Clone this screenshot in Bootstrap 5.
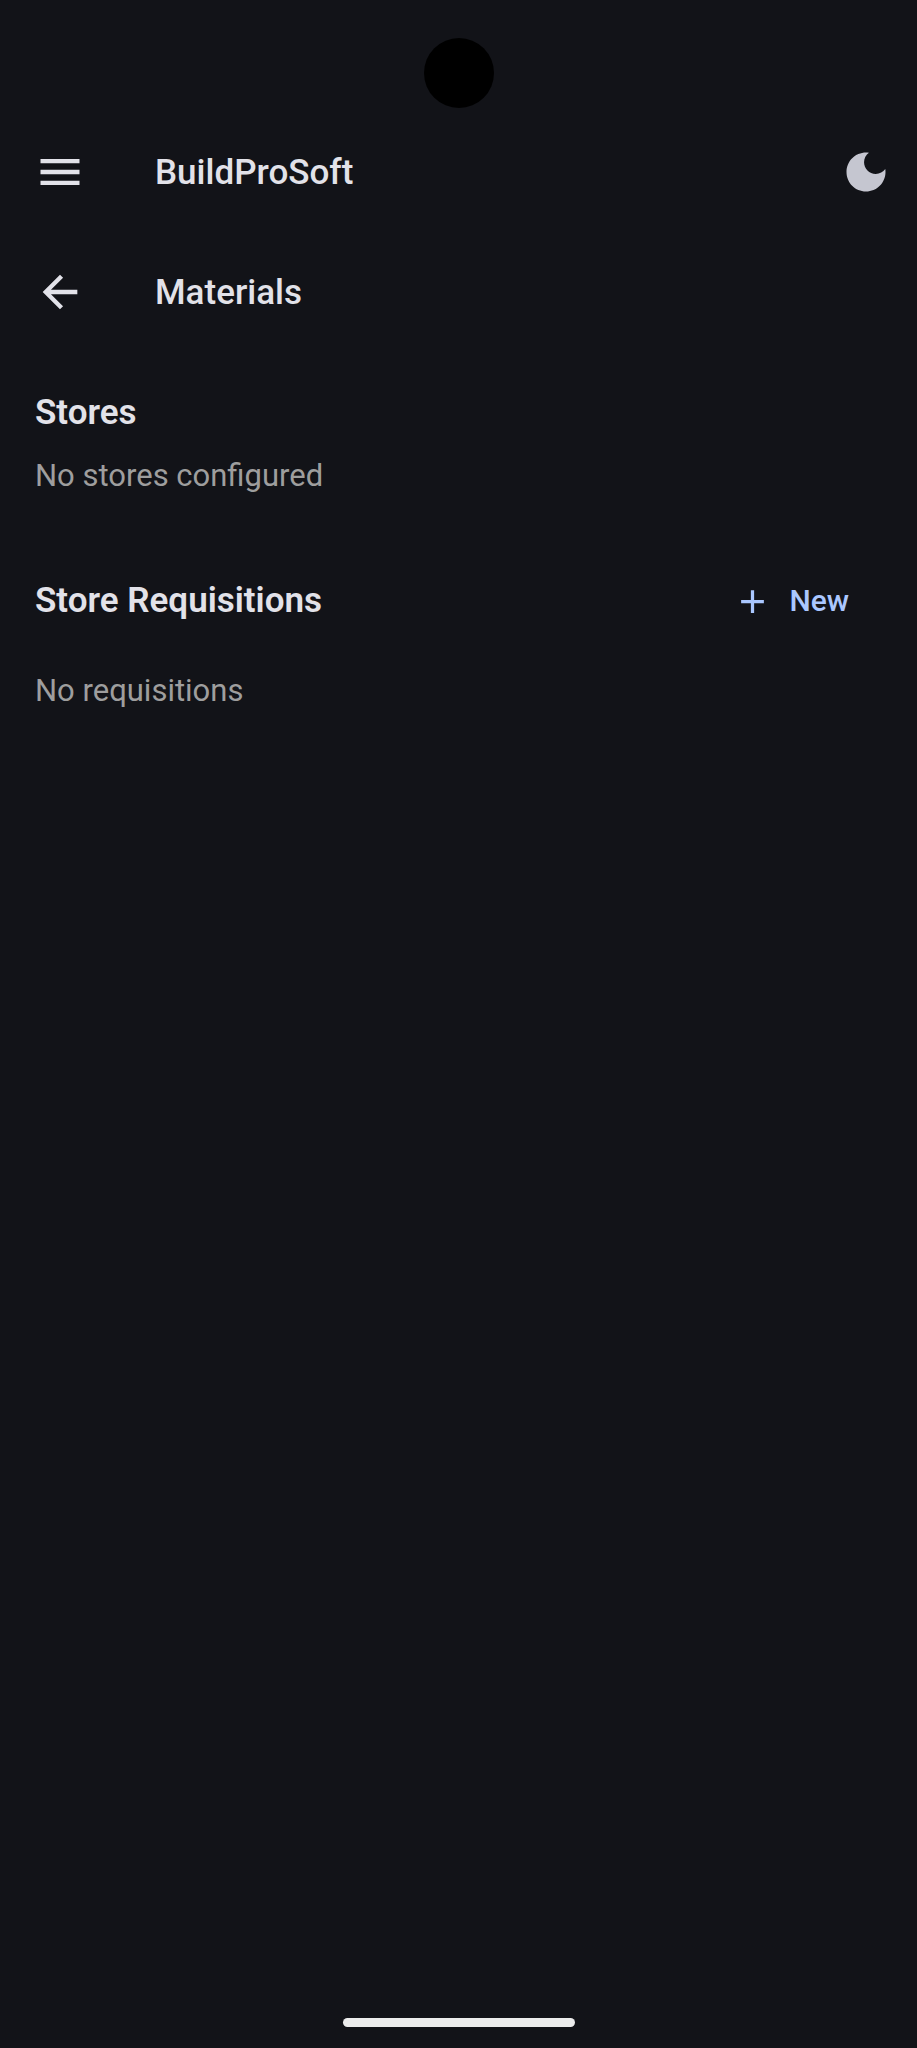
<!DOCTYPE html>
<html lang="en" data-bs-theme="dark">
<head>
<meta charset="utf-8">
<meta name="viewport" content="width=device-width, initial-scale=1">
<title>BuildProSoft – Materials</title>
<link href="https://cdn.jsdelivr.net/npm/bootstrap@5.3.0/dist/css/bootstrap.min.css" rel="stylesheet">
<style>
  body { background: #121318; color: #e2e2e9; font-family: Roboto, "Liberation Sans", sans-serif; }
  .status-area { height: 112px; padding-top: 38px; }
  .camera { width: 70px; height: 70px; background: #000; }
  .app-bar { height: 120px; padding: 0 25px 0 34px; }
  .icon-btn { width: 52px; height: 52px; color: inherit; }
  .icon-btn svg { width: 52px; height: 52px; }
  .theme-btn { color: #c5c6d0; }
  .bar-title, .section-title { color: #e2e2e9; font-size: 35px; line-height: 52px; font-weight: 500; }
  .bar-title { margin-left: 69px; padding-top: 2px; }
  .content { padding: 35px; }
  .section-title { font-weight: 600; }
  .empty-note { font-size: 31px; line-height: 42px; color: #9e9e9e; }
  .section-head { margin-top: 61px; height: 86px; margin-bottom: 26px; }
  .new-btn { color: #aac7ff; font-size: 30px; line-height: 42px; font-weight: 500; gap: 17px; padding: 20px 33px; }
  .new-btn svg { width: 39px; height: 39px; }
  .home-handle { width: 232px; height: 9px; background: #ececec; }
  .gesture-area { padding-bottom: 21px; }
</style>
</head>
<body>
<div class="d-flex flex-column min-vh-100">
  <div class="status-area d-flex justify-content-center align-items-start"><div class="camera rounded-circle"></div></div>
  <header>
    <nav class="app-bar d-flex align-items-center" aria-label="Main">
      <button type="button" class="btn icon-btn border-0 p-0 d-flex" aria-label="Open menu">
        <svg viewBox="0 0 24 24" fill="currentColor" aria-hidden="true"><path d="M3 18h18v-2H3v2zm0-5h18v-2H3v2zm0-7v2h18V6H3z"/></svg>
      </button>
      <span class="bar-title">BuildProSoft</span>
      <button type="button" class="btn icon-btn theme-btn border-0 p-0 d-flex ms-auto" aria-label="Toggle dark theme">
        <svg viewBox="0 0 24 24" fill="currentColor" aria-hidden="true"><path d="M12 3c-4.97 0-9 4.03-9 9s4.03 9 9 9 9-4.03 9-9c0-.46-.04-.92-.1-1.36-.98 1.37-2.58 2.26-4.4 2.26-2.98 0-5.4-2.42-5.4-5.4 0-1.81.89-3.42 2.26-4.4-.44-.06-.9-.1-1.36-.1z"/></svg>
      </button>
    </nav>
    <div class="app-bar d-flex align-items-center">
      <button type="button" class="btn icon-btn border-0 p-0 d-flex" aria-label="Back">
        <svg viewBox="0 0 24 24" fill="currentColor" aria-hidden="true"><path d="M20 11H7.83l5.59-5.59L12 4l-8 8 8 8 1.41-1.41L7.83 13H20v-2z"/></svg>
      </button>
      <h1 class="bar-title mb-0">Materials</h1>
    </div>
  </header>
  <main class="content flex-grow-1">
    <section>
      <h2 class="section-title mb-3">Stores</h2>
      <p class="empty-note mb-0">No stores configured</p>
    </section>
    <section>
      <div class="section-head d-flex align-items-center justify-content-between">
        <h2 class="section-title mb-0">Store Requisitions</h2>
        <button type="button" class="btn new-btn border-0 d-flex align-items-center">
          <svg viewBox="0 0 24 24" fill="currentColor" aria-hidden="true"><path d="M19 13h-6v6h-2v-6H5v-2h6V5h2v6h6v2z"/></svg>
          New
        </button>
      </div>
      <p class="empty-note mb-0">No requisitions</p>
    </section>
  </main>
  <footer class="gesture-area d-flex justify-content-center"><div class="home-handle rounded-pill"></div></footer>
</div>
<script src="https://cdn.jsdelivr.net/npm/bootstrap@5.3.0/dist/js/bootstrap.bundle.min.js"></script>
</body>
</html>
